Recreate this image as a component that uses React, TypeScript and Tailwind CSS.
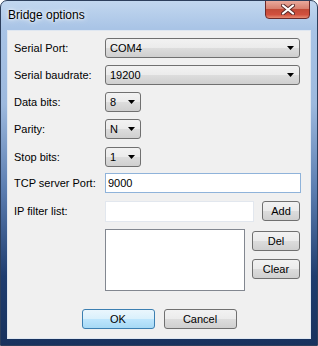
import React from "react";

const font = { fontFamily: '"Liberation Sans", Arial, sans-serif' };

function Arrow() {
  return (
    <svg width="7" height="4" viewBox="0 0 7 4" className="shrink-0">
      <path d="M0 0 H7 L3.5 4 Z" fill="#000" />
    </svg>
  );
}

function Combo({ value, w }: { value: string; w: string }) {
  return (
    <div
      className={`${w} h-[20px] flex items-center justify-between pl-[4px] pr-[5px] rounded-[3px] border border-[#707070] bg-[linear-gradient(#f2f2f2_0%,#ebebeb_50%,#dddddd_50%,#cfcfcf_100%)] text-[11px] text-black`}
    >
      <span>{value}</span>
      <Arrow />
    </div>
  );
}

function Button({ label, w, primary }: { label: string; w: string; primary?: boolean }) {
  return (
    <div
      className={`${w} h-[20px] flex items-center justify-center rounded-[3px] border text-[11px] text-black ${
        primary
          ? "border-[#3c7fb1] bg-[linear-gradient(#eaf6fd_0%,#d9f0fc_50%,#bee6fd_50%,#a7d9f5_100%)]"
          : "border-[#707070] bg-[linear-gradient(#f2f2f2_0%,#ebebeb_50%,#dddddd_50%,#cfcfcf_100%)]"
      }`}
    >
      {label}
    </div>
  );
}

function Row({ label, top, children }: { label: string; top: string; children: React.ReactNode }) {
  return (
    <div className={`flex items-center h-[20px] ${top}`}>
      <div className="w-[91px] text-[11px] text-black">{label}</div>
      {children}
    </div>
  );
}

export default function App() {
  return (
    <div
      className="w-[318px] h-[346px] relative rounded-t-[7px] border border-[#2d3f5c] bg-[linear-gradient(#c2d7ef_0%,#a9c4e6_8%,#9db9de_30%,#5b7db0_55%,#1f3d6f_80%,#18325e_100%)] overflow-hidden"
      style={font}
    >
      {/* title bar */}
      <div className="h-[29px] pl-[7px] pt-[5px] text-[12px] text-black [text-shadow:0_0_6px_#fff,0_0_3px_#fff]">
        Bridge options
      </div>
      <div className="absolute top-[-1px] right-[7px] w-[45px] h-[19px] rounded-b-[4px] border border-[#6b2a2a] bg-[linear-gradient(#e9a99c_0%,#d7806f_45%,#c24a37_50%,#d1503e_80%,#e58a72_100%)] flex items-center justify-center">
        <svg width="14" height="11" viewBox="0 0 14 11">
          <path d="M2 1.5 L12 9.5 M12 1.5 L2 9.5" stroke="#5a2a2a" strokeWidth="4" strokeLinecap="round" />
          <path d="M2 1.5 L12 9.5 M12 1.5 L2 9.5" stroke="#fff" strokeWidth="2.2" strokeLinecap="round" />
        </svg>
      </div>

      {/* client area */}
      <div className="mx-[6px] h-[309px] border border-[#dfe7f1] bg-[#f0f0f0] flex flex-col pl-[6px]">
        <Row label="Serial Port:" top="mt-[7px]">
          <Combo value="COM4" w="w-[195px]" />
        </Row>
        <Row label="Serial baudrate:" top="mt-[7px]">
          <Combo value="19200" w="w-[195px]" />
        </Row>
        <Row label="Data bits:" top="mt-[7px]">
          <Combo value="8" w="w-[36px]" />
        </Row>
        <Row label="Parity:" top="mt-[7px]">
          <Combo value="N" w="w-[36px]" />
        </Row>
        <Row label="Stop bits:" top="mt-[8px]">
          <Combo value="1" w="w-[36px]" />
        </Row>
        <Row label="TCP server Port:" top="mt-[6px]">
          <div className="w-[196px] h-[20px] border border-[#8fb3da] bg-white flex items-center pl-[2px] text-[11px] text-black">
            9000
          </div>
        </Row>
        <Row label="IP filter list:" top="mt-[8px]">
          <div className="w-[149px] h-[21px] border border-[#e2e7ee] bg-white" />
          <div className="ml-[8px]">
            <Button label="Add" w="w-[38px]" />
          </div>
        </Row>
        <div className="flex mt-[8px] pl-[91px]">
          <div className="w-[140px] h-[62px] border border-[#828790] bg-white" />
          <div className="ml-[7px] mt-[2px] flex flex-col gap-[8px]">
            <Button label="Del" w="w-[48px]" />
            <Button label="Clear" w="w-[48px]" />
          </div>
        </div>
        <div className="flex justify-center gap-[9px] mt-[18px] pr-[6px]">
          <Button label="OK" w="w-[73px]" primary />
          <Button label="Cancel" w="w-[73px]" />
        </div>
      </div>
    </div>
  );
}
